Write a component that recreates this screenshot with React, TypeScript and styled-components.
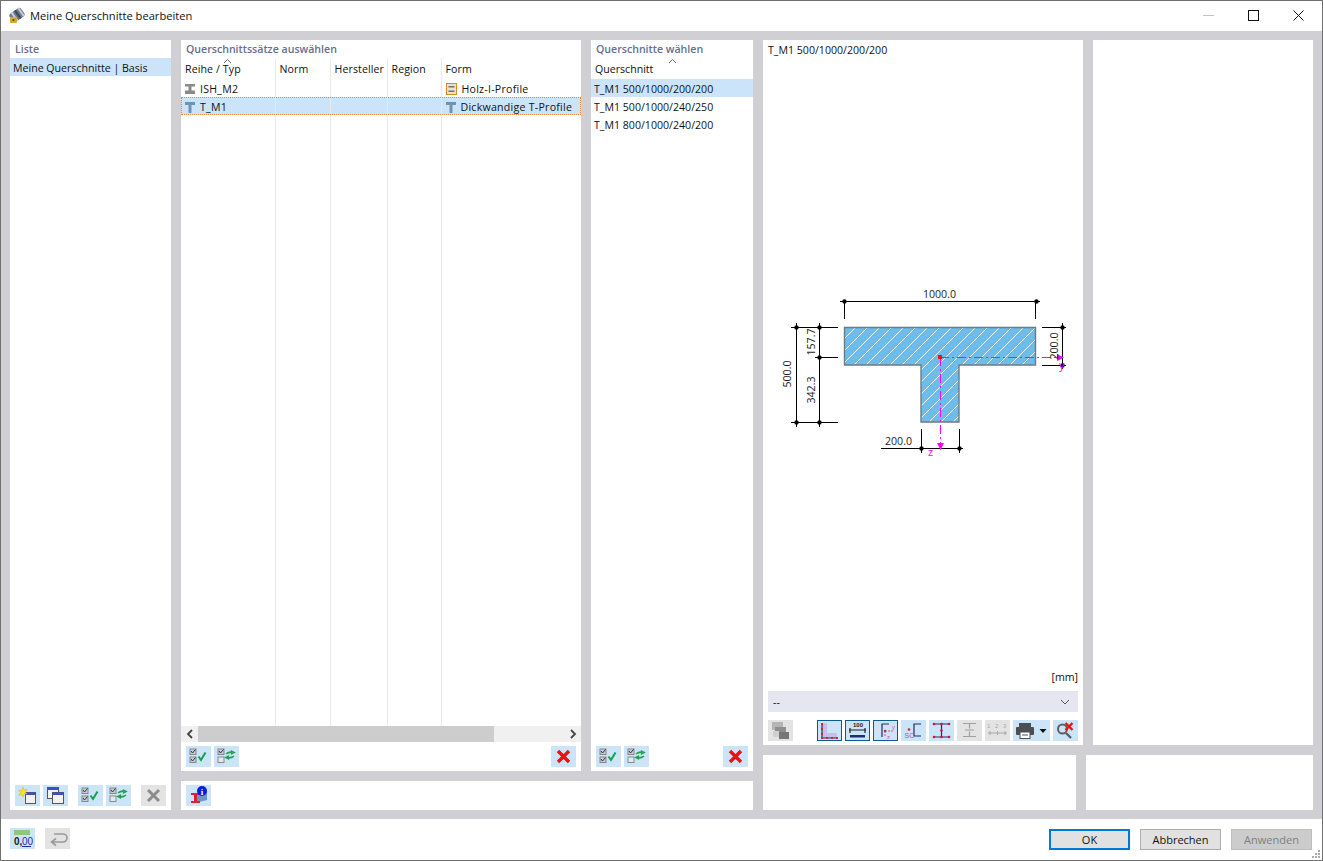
import styled, { createGlobalStyle } from 'styled-components';

const GlobalStyle = createGlobalStyle`
  html, body {
    margin: 0;
    padding: 0;
    background: #ffffff;
  }
  * {
    box-sizing: border-box;
  }
`;

const FONT = `'Open Sans', 'Noto Sans', sans-serif`;

// Window frame
const Window = styled.div`
  width: 1323px;
  height: 861px;
  border: 1px solid #707070;
  display: flex;
  flex-direction: column;
  font-family: ${FONT};
  font-size: 10.6px;
  color: #111;
  background: #ffffff;
  position: relative;
`;

const TitleBar = styled.div`
  height: 30px;
  flex: none;
  display: flex;
  align-items: center;
  padding: 0 1px 2px 7px;
`;

const WindowTitle = styled.span`
  margin-left: 5px;
  font-size: 11.15px;
  color: #111;
`;

const WindowControls = styled.div`
  margin-left: auto;
  display: flex;
  height: 100%;
`;

const WindowControl = styled.div`
  width: 45px;
  height: 100%;
  display: flex;
  align-items: center;
  justify-content: center;
`;

const Content = styled.div`
  flex: 1;
  min-height: 0;
  background: #d0cfd4;
  padding: 9px;
  display: flex;
  gap: 10px;
`;

const Column = styled.div<{ $w: number }>`
  width: ${(p) => p.$w}px;
  flex: none;
  display: flex;
  flex-direction: column;
  gap: 10px;
`;

const PanelRow = styled.div<{ $h?: number }>`
  display: flex;
  gap: 10px;
  ${(p) => (p.$h ? `height: ${p.$h}px; flex: none;` : 'flex: 1; min-height: 0;')}
`;

const Panel = styled.section<{ $w?: number }>`
  background: #ffffff;
  display: flex;
  flex-direction: column;
  min-height: 0;
  min-width: 0;
  ${(p) => (p.$w ? `width: ${p.$w}px; flex: none;` : 'flex: 1;')}
`;

const PanelTitle = styled.div`
  height: 18px;
  flex: none;
  padding: 2px 0 0 5px;
  font-weight: 600;
  color: #64708e;
  line-height: 15px;
  white-space: nowrap;
`;

const ListRow = styled.div<{ $selected?: boolean }>`
  height: 18px;
  flex: none;
  line-height: 20px;
  padding-left: 3px;
  white-space: nowrap;
  background: ${(p) => (p.$selected ? '#cce4f9' : 'transparent')};
`;

const Grow = styled.div`
  flex: 1;
  min-height: 0;
`;

// Toolbars
const Toolbar = styled.div`
  flex: none;
  display: flex;
  align-items: center;
  gap: 3px;
  padding: 4px 5px;
`;

const Spacer = styled.div<{ $w?: number }>`
  ${(p) => (p.$w ? `width: ${p.$w}px; flex: none;` : 'flex: 1;')}
`;

const ToolButton = styled.div<{ $variant?: 'blue' | 'gray' | 'active'; $w?: number }>`
  width: ${(p) => p.$w ?? 25}px;
  height: 21px;
  flex: none;
  display: flex;
  align-items: center;
  justify-content: center;
  background: ${(p) => (p.$variant === 'gray' ? '#e3e3e3' : '#cce4f7')};
  border: ${(p) => (p.$variant === 'active' ? '1px solid #0f5a94' : 'none')};
`;

// Table
const TableWrap = styled.div`
  flex: 1;
  min-height: 0;
  overflow: hidden;
`;

const Table = styled.table`
  width: 100%;
  height: 100%;
  border-collapse: collapse;
  table-layout: fixed;
`;

const HeadCell = styled.th<{ $w?: number }>`
  ${(p) => (p.$w ? `width: ${p.$w}px;` : '')}
  height: 21px;
  padding: 1px 0 1px 4px;
  text-align: left;
  font-weight: 400;
  letter-spacing: 0.1px;
  white-space: nowrap;
  border-right: 1px solid #e9e9e9;
  position: relative;
  &:last-child {
    border-right: none;
  }
`;

const SortCaret = styled.svg<{ $x: number }>`
  position: absolute;
  left: ${(p) => p.$x}px;
  top: 0;
`;

const BodyRow = styled.tr<{ $selected?: boolean }>`
  height: 18px;
  background: ${(p) => (p.$selected ? '#cce4f9' : 'transparent')};
  ${(p) => (p.$selected ? 'outline: 1px dotted #e08a3c; outline-offset: -1px;' : '')}
`;

const BodyCell = styled.td`
  padding: 2px 0 0 4px;
  white-space: nowrap;
  letter-spacing: 0.25px;
  border-right: 1px solid #e9e9e9;
  line-height: 16px;
  &:last-child {
    border-right: none;
  }
`;

const FillerRow = styled.tr`
  height: auto;
`;

const CellInner = styled.div`
  display: flex;
  align-items: center;
  gap: 5px;
`;

const SingleHeader = styled.div`
  height: 21px;
  flex: none;
  padding: 2px 0 0 4px;
  line-height: 18px;
  position: relative;
`;

// Scrollbar
const ScrollBar = styled.div`
  height: 16px;
  flex: none;
  display: flex;
  align-items: center;
  background: #f0f0f0;
`;

const ScrollArrow = styled.div`
  width: 17px;
  height: 100%;
  flex: none;
  display: flex;
  align-items: center;
  justify-content: center;
`;

const ScrollTrack = styled.div`
  flex: 1;
  height: 100%;
`;

const ScrollThumb = styled.div`
  width: 296px;
  height: 100%;
  background: #cdcdcd;
`;

// Preview
const PreviewCaption = styled.div`
  height: 18px;
  flex: none;
  padding: 2px 0 0 5px;
  line-height: 16px;
`;

const DiagramArea = styled.div`
  flex: 1;
  min-height: 0;
  display: flex;
  align-items: center;
  justify-content: center;
`;

const UnitLabel = styled.div`
  height: 20px;
  flex: none;
  padding: 0 5px 0 0;
  text-align: right;
  line-height: 12px;
`;

const SelectBox = styled.div`
  height: 21px;
  flex: none;
  margin: 0 5px 4px;
  padding: 0 8px 0 5px;
  background: #e6e6f0;
  display: flex;
  align-items: center;
  justify-content: space-between;
`;

// Footer
const Footer = styled.div`
  height: 41px;
  flex: none;
  display: flex;
  padding: 9px 10px 0 9px;
  align-items: flex-start;
`;

const DialogButton = styled.div<{ $kind?: 'default' | 'disabled' }>`
  width: 81px;
  height: 21px;
  margin: 1px 0 0 10px;
  flex: none;
  display: flex;
  align-items: center;
  justify-content: center;
  font-size: 11px;
  background: ${(p) => (p.$kind === 'disabled' ? '#cccccc' : '#e1e1e1')};
  color: ${(p) => (p.$kind === 'disabled' ? '#808080' : '#111')};
  border: ${(p) =>
    p.$kind === 'default'
      ? '2px solid #0078d7'
      : p.$kind === 'disabled'
        ? '1px solid #bfbfbf'
        : '1px solid #adadad'};
`;

const Grip = styled.svg`
  position: absolute;
  right: 1px;
  bottom: 1px;
`;

// Icons
const AppIcon = () => (
  <svg width="17" height="17" viewBox="0 0 17 17">
    <g transform="rotate(-35 9 8)">
      <rect x="2" y="3" width="14" height="10" rx="2.500" fill="#6f7b8c" />
      <rect x="5" y="3" width="2" height="10" fill="#c9d0da" />
      <rect x="9" y="3" width="2" height="10" fill="#3c4658" />
      <rect x="13" y="3" width="2" height="10" fill="#c9d0da" />
    </g>
    <rect x="2" y="10" width="7" height="6" rx="1" fill="#d8a92c" />
    <rect x="4.500" y="12" width="2" height="2" fill="#6b5210" />
  </svg>
);

const IBeam = () => (
  <svg width="10" height="10" viewBox="0 0 10 10">
    <path d="M0 0h10v2.500H6.500v4H10V10H0V6.500h3.500v-4H0z" fill="#8a8a8a" />
  </svg>
);

const TBeam = () => (
  <svg width="10" height="11" viewBox="0 0 10 11">
    <path d="M0 0h10v3H6.500v8h-3V3H0z" fill="#6d94b5" />
  </svg>
);

const WoodIcon = () => (
  <svg width="11" height="12" viewBox="0 0 11 12">
    <rect x="0.500" y="0.500" width="10" height="11" fill="#e8e2d2" stroke="#d98a24" />
    <path d="M2.500 3h6v1.500h-6zM2.500 7.500h6V9h-6z" fill="#76706a" />
  </svg>
);

const CheckBoxes = () => (
  <>
    <rect x="4" y="3" width="6" height="5.500" fill="#c8ccd2" stroke="#84888e" />
    <path d="M5 5l1.500 2L9.500 3.500" fill="none" stroke="#333" />
  </>
);

const CheckAllIcon = () => (
  <svg width="25" height="21" viewBox="0 0 25 21">
    <CheckBoxes />
    <rect x="4" y="11" width="6" height="5.500" fill="#c8ccd2" stroke="#84888e" />
    <path d="M5 13l1.500 2 3-3.500" fill="none" stroke="#333" />
    <path d="M12.500 10.500l2.500 3.500 4.500-7.500" fill="none" stroke="#12a150" strokeWidth="2" />
  </svg>
);

const ToggleIcon = () => (
  <svg width="25" height="21" viewBox="0 0 25 21">
    <CheckBoxes />
    <rect x="4" y="11" width="6" height="5.500" fill="#dfeaf4" stroke="#8a8a8a" />
    <path d="M12 8c2-2 5-2.500 8-1.500M20.500 6.500l-3-1.500v3z" fill="#22a04e" stroke="#22a04e" strokeWidth="1.200" />
    <path d="M20 10c-2 2-5 2.500-8 1.500M11.500 11.500l3 1.500v-3z" fill="#22a04e" stroke="#22a04e" strokeWidth="1.200" />
  </svg>
);

const RedXIcon = () => (
  <svg width="25" height="21" viewBox="0 0 25 21">
    <path d="M7 5l11 11M18 5L7 16" stroke="#f01010" strokeWidth="3.400" />
  </svg>
);

const GrayXIcon = () => (
  <svg width="25" height="21" viewBox="0 0 25 21">
    <path d="M7 5l11 11M18 5L7 16" stroke="#8c8c8c" strokeWidth="3" />
  </svg>
);

const NewWindowIcon = () => (
  <svg width="25" height="21" viewBox="0 0 25 21">
    <rect x="10.500" y="7.500" width="10" height="11" fill="#f2f2f2" stroke="#555" />
    <rect x="10.500" y="7.500" width="10" height="2.500" fill="#3a50c8" />
    <path d="M8 2l1.200 3 3-.6-2 2.400 2 2.400-3-.6L8 12 6.800 9.600l-3 .6 2-2.400-2-2.400 3 .6z" fill="#f8e71c" stroke="#d8a000" strokeWidth=".4" />
  </svg>
);

const CopyWindowIcon = () => (
  <svg width="25" height="21" viewBox="0 0 25 21">
    <rect x="4.500" y="2.500" width="11" height="11" fill="#f2f2f2" stroke="#555" />
    <rect x="4.500" y="2.500" width="11" height="2.500" fill="#3a50c8" />
    <rect x="9.500" y="7.500" width="11" height="11" fill="#f2f2f2" stroke="#555" />
    <rect x="9.500" y="7.500" width="11" height="2.500" fill="#3a50c8" />
  </svg>
);

const InfoIcon = () => (
  <svg width="25" height="21" viewBox="0 0 25 21">
    <path d="M9 10l12-3v8l-12 3z" fill="#6f95c4" />
    <path d="M5 8h9v2h-3v6h3v2H5v-2h3v-6H5z" fill="#d8222c" />
    <circle cx="16" cy="6" r="5" fill="#0a1ed8" />
    <text x="16" y="9.500" textAnchor="middle" fontSize="9" fontWeight="700" fill="#fff" fontFamily="Liberation Serif, serif">i</text>
  </svg>
);

const DecimalsIcon = () => (
  <svg width="25" height="21" viewBox="0 0 25 21">
    <rect x="4" y="2" width="16" height="5" fill="#8cc878" />
    <text x="4" y="17" fontSize="10" fontWeight="700" fill="#222" fontFamily="Liberation Sans, sans-serif">0,</text>
    <text x="12" y="17" fontSize="10" fill="#1c2f9c" fontFamily="Liberation Sans, sans-serif">00</text>
    <path d="M12 18.500h9" stroke="#1c2f9c" />
  </svg>
);

const UndoIcon = () => (
  <svg width="25" height="21" viewBox="0 0 25 21">
    <path d="M9 6h9a3.500 3.500 0 0 1 0 8H7M11 10.500L6.500 14l4.500 3.500" fill="none" stroke="#9a9a9a" strokeWidth="1.600" />
  </svg>
);

const SnapshotIcon = () => (
  <svg width="25" height="21" viewBox="0 0 25 21">
    <rect x="4" y="2" width="11" height="8" fill="#b5b5b5" />
    <rect x="7" y="7" width="11" height="8" fill="#8f8f8f" />
    <rect x="11" y="12" width="10" height="7" fill="#777" />
    <rect x="5" y="11" width="6" height="6" fill="#cfcfcf" />
  </svg>
);

const SurfaceIcon = () => (
  <svg width="23" height="19" viewBox="0 0 23 19">
    <path d="M4 2h5v10h10v5H4z" fill="#cbbcf0" />
    <path d="M4 2v15h15" fill="none" stroke="#1c2f6c" strokeWidth="1.200" />
    <g fill="#d8222c">
      <rect x="3" y="2" width="2" height="2" /><rect x="3" y="7" width="2" height="2" />
      <rect x="3" y="12" width="2" height="2" /><rect x="3" y="16" width="2" height="2" />
      <rect x="8" y="16" width="2" height="2" /><rect x="13" y="16" width="2" height="2" />
      <rect x="18" y="16" width="2" height="2" />
    </g>
  </svg>
);

const DimensionIcon = () => (
  <svg width="23" height="19" viewBox="0 0 23 19">
    <text x="12" y="6" textAnchor="middle" fontSize="6" fontWeight="700" fill="#222" fontFamily="Liberation Sans, sans-serif">100</text>
    <path d="M3 9h17" stroke="#222" />
    <path d="M4 7v5M19 7v5" stroke="#222" strokeWidth="1.200" />
    <rect x="4" y="14" width="15" height="2.500" fill="#1c2f6c" />
  </svg>
);

const AxesIcon = () => (
  <svg width="23" height="19" viewBox="0 0 23 19">
    <path d="M15 3H8v13" fill="none" stroke="#1c2f6c" strokeWidth="1.200" />
    <path d="M11 10h8M11 10v6" stroke="#d94fa8" strokeWidth="1" strokeDasharray="2 1" />
    <circle cx="11" cy="10" r="1.200" fill="#d8222c" />
    <text x="18" y="8" fontSize="6" fill="#d94fa8" fontFamily="Liberation Sans, sans-serif">y</text>
    <text x="13" y="18" fontSize="6" fill="#d94fa8" fontFamily="Liberation Sans, sans-serif">z</text>
  </svg>
);

const ShearIcon = () => (
  <svg width="25" height="21" viewBox="0 0 25 21">
    <path d="M20 4h-7v12h7" fill="none" stroke="#1c2f6c" strokeWidth="1.200" />
    <circle cx="8" cy="9.500" r="1.300" fill="#d8222c" />
    <text x="3.500" y="18" fontSize="7" fill="#c04aa0" fontFamily="Liberation Sans, sans-serif">SC</text>
  </svg>
);

const PointsIcon = () => (
  <svg width="25" height="21" viewBox="0 0 25 21">
    <path d="M5 4h15M5 17h15M12.500 4v13" fill="none" stroke="#1c2f6c" strokeWidth="1.200" />
    <g fill="#e01030">
      <circle cx="5" cy="4" r="1.300" /><circle cx="12.500" cy="4" r="1.300" /><circle cx="20" cy="4" r="1.300" />
      <circle cx="12.500" cy="10.500" r="1.300" />
      <circle cx="5" cy="17" r="1.300" /><circle cx="12.500" cy="17" r="1.300" /><circle cx="20" cy="17" r="1.300" />
    </g>
  </svg>
);

const OutlineIcon = () => (
  <svg width="25" height="21" viewBox="0 0 25 21">
    <path d="M6 3.500h13M6 16.500h13M12.500 3.500v5M12.500 11.500v5M8 10h9" fill="none" stroke="#a0a0a0" strokeWidth="1.200" />
  </svg>
);

const NumberingIcon = () => (
  <svg width="25" height="21" viewBox="0 0 25 21">
    <text x="12.500" y="8" textAnchor="middle" fontSize="6" letterSpacing="1.500" fill="#a8a8a8" fontFamily="Liberation Sans, sans-serif">1 2 3</text>
    <path d="M3 13h19M5 11v4M12.500 11v4M20 11v4" stroke="#a8a8a8" />
  </svg>
);

const PrintIcon = () => (
  <svg width="37" height="21" viewBox="0 0 37 21">
    <rect x="6" y="3" width="12" height="4" fill="#4a4f55" />
    <rect x="3" y="7" width="18" height="8" rx="1" fill="#4a4f55" />
    <rect x="7" y="12" width="10" height="6.500" fill="#fff" stroke="#4a4f55" />
    <path d="M9 15h6" stroke="#4a4f55" />
    <path d="M26.500 9h7l-3.500 4z" fill="#111" />
  </svg>
);

const ZoomResetIcon = () => (
  <svg width="25" height="21" viewBox="0 0 25 21">
    <circle cx="9.500" cy="9" r="4.500" fill="none" stroke="#5a6068" strokeWidth="2" />
    <path d="M13 13l5 5" stroke="#5a6068" strokeWidth="2.400" />
    <path d="M12.500 3l7 7M19.500 3l-7 7" stroke="#f01010" strokeWidth="2.400" />
  </svg>
);

const Caret = ({ x }: { x: number }) => (
  <SortCaret $x={x} width="9" height="6" viewBox="0 0 9 6">
    <path d="M1 5l3.500-3.500L8 5" fill="none" stroke="#666" />
  </SortCaret>
);

const BLACK_DOTS: [number, number][] = [
  [844, 301], [1036, 301],
  [796, 327], [819, 327], [819, 357], [796, 422], [819, 422],
  [1062, 327], [1062, 365],
  [921, 448], [959, 448],
];

// Section drawing with its dimension lines
function SectionDrawing() {
  return (
    <svg width="310" height="189" viewBox="768 270 310 189">
      <defs>
        <pattern id="hatch" width="12" height="12" patternUnits="userSpaceOnUse" patternTransform="translate(844 327)">
          <rect width="12" height="12" fill="#6dbce9" />
          <path d="M-2 2L2 -2M-2 14L14 -2M10 14L14 10" stroke="#ffffff" strokeWidth="1" opacity=".85" />
        </pattern>
      </defs>
      <path
        d="M844.500 327.500H1035.500V365H959V422H921V365H844.500Z"
        fill="url(#hatch)"
        stroke="#6f7a82"
        strokeWidth="1.400"
      />
      <g stroke="#000" strokeWidth="1" fill="none">
        <path d="M840 301.500H1040M844.500 301V319M1035.500 301V319" />
        <path d="M791 327.500H838M815 357.500H838M791 422.500H838" />
        <path d="M796.500 323V427M819.500 323V427" />
        <path d="M1042 327.500H1066M1042 365.500H1066M1062.500 323V369" />
        <path d="M881 448.500H963M921.500 429V453M959.500 429V453" />
      </g>
      <g fill="#000">
        {BLACK_DOTS.map(([x, y]) => (
          <circle key={`${x}-${y}`} cx={x + 0.5} cy={y + 0.5} r="2.200" />
        ))}
      </g>
      <g stroke="#ff00ff" strokeWidth="1" fill="none" strokeDasharray="9 3 2 3">
        <path d="M940 357.500H1060" />
        <path d="M940.500 357V445" />
      </g>
      <path d="M1057 354l7 3.500-7 3.500zM937 443h7l-3.500 7z" fill="#ff00ff" />
      <rect x="938" y="355" width="4" height="4" fill="#f01010" />
      <g fontFamily="'Open Sans', sans-serif" fontSize="10.600" fill="#1a1a1a">
        <text x="939.500" y="298" textAnchor="middle">1000.0</text>
        <text x="898.500" y="445" textAnchor="middle">200.0</text>
        <text transform="translate(791 374) rotate(-90)" textAnchor="middle">500.0</text>
        <text transform="translate(815 342) rotate(-90)" textAnchor="middle">157.7</text>
        <text transform="translate(815 390) rotate(-90)" textAnchor="middle">342.3</text>
        <text transform="translate(1058 346) rotate(-90)" textAnchor="middle">200.0</text>
      </g>
      <g fontFamily="'Open Sans', sans-serif" fontSize="11" fill="#ff00ff">
        <text x="1059" y="369">y</text>
        <text x="928" y="456">z</text>
      </g>
    </svg>
  );
}

const SETS = [
  { name: 'ISH_M2', form: 'Holz-I-Profile', icon: <IBeam />, formIcon: <WoodIcon /> },
  { name: 'T_M1', form: 'Dickwandige T-Profile', icon: <TBeam />, formIcon: <TBeam />, selected: true },
];

const SECTIONS = ['T_M1 500/1000/200/200', 'T_M1 500/1000/240/250', 'T_M1 800/1000/240/200'];

export default function App() {
  return (
    <>
      <GlobalStyle />
      <Window>
        <TitleBar>
          <AppIcon />
          <WindowTitle>Meine Querschnitte bearbeiten</WindowTitle>
          <WindowControls>
            <WindowControl>
              <svg width="11" height="11" viewBox="0 0 11 11"><path d="M0 5.500h11" stroke="#c4c4c4" /></svg>
            </WindowControl>
            <WindowControl>
              <svg width="11" height="11" viewBox="0 0 11 11"><rect x=".5" y=".5" width="10" height="10" fill="none" stroke="#111" /></svg>
            </WindowControl>
            <WindowControl>
              <svg width="11" height="11" viewBox="0 0 11 11"><path d="M.5 .5l10 10M10.500 .5l-10 10" stroke="#111" /></svg>
            </WindowControl>
          </WindowControls>
        </TitleBar>

        <Content>
          <Column $w={161}>
            <Panel>
              <PanelTitle>Liste</PanelTitle>
              <ListRow $selected>Meine Querschnitte | Basis</ListRow>
              <Grow />
              <Toolbar>
                <ToolButton><NewWindowIcon /></ToolButton>
                <ToolButton><CopyWindowIcon /></ToolButton>
                <Spacer $w={4} />
                <ToolButton><CheckAllIcon /></ToolButton>
                <ToolButton><ToggleIcon /></ToolButton>
                <Spacer $w={4} />
                <ToolButton $variant="gray"><GrayXIcon /></ToolButton>
              </Toolbar>
            </Panel>
          </Column>

          <Column $w={572}>
            <PanelRow>
              <Panel $w={400}>
                <PanelTitle>Querschnittssätze auswählen</PanelTitle>
                <TableWrap>
                  <Table>
                    <thead>
                      <tr>
                        <HeadCell $w={94}>Reihe / Typ<Caret x={42} /></HeadCell>
                        <HeadCell $w={55}>Norm</HeadCell>
                        <HeadCell $w={57}>Hersteller</HeadCell>
                        <HeadCell $w={54}>Region</HeadCell>
                        <HeadCell>Form</HeadCell>
                      </tr>
                    </thead>
                    <tbody>
                      {SETS.map((s) => (
                        <BodyRow key={s.name} $selected={s.selected}>
                          <BodyCell><CellInner>{s.icon}{s.name}</CellInner></BodyCell>
                          <BodyCell />
                          <BodyCell />
                          <BodyCell />
                          <BodyCell><CellInner>{s.formIcon}{s.form}</CellInner></BodyCell>
                        </BodyRow>
                      ))}
                      <FillerRow>
                        <BodyCell />
                        <BodyCell />
                        <BodyCell />
                        <BodyCell />
                        <BodyCell />
                      </FillerRow>
                    </tbody>
                  </Table>
                </TableWrap>
                <ScrollBar>
                  <ScrollArrow>
                    <svg width="8" height="10" viewBox="0 0 8 10"><path d="M6 1L2 5l4 4" fill="none" stroke="#444" strokeWidth="1.800" /></svg>
                  </ScrollArrow>
                  <ScrollTrack><ScrollThumb /></ScrollTrack>
                  <ScrollArrow>
                    <svg width="8" height="10" viewBox="0 0 8 10"><path d="M2 1l4 4-4 4" fill="none" stroke="#444" strokeWidth="1.800" /></svg>
                  </ScrollArrow>
                </ScrollBar>
                <Toolbar>
                  <ToolButton><CheckAllIcon /></ToolButton>
                  <ToolButton><ToggleIcon /></ToolButton>
                  <Spacer />
                  <ToolButton><RedXIcon /></ToolButton>
                </Toolbar>
              </Panel>
              <Panel>
                <PanelTitle>Querschnitte wählen</PanelTitle>
                <SingleHeader>Querschnitt<Caret x={77} /></SingleHeader>
                {SECTIONS.map((name, i) => (
                  <ListRow key={name} $selected={i === 0}>{name}</ListRow>
                ))}
                <Grow />
                <Toolbar>
                  <ToolButton><CheckAllIcon /></ToolButton>
                  <ToolButton><ToggleIcon /></ToolButton>
                  <Spacer />
                  <ToolButton><RedXIcon /></ToolButton>
                </Toolbar>
              </Panel>
            </PanelRow>
            <PanelRow $h={29}>
              <Panel>
                <Toolbar>
                  <ToolButton><InfoIcon /></ToolButton>
                </Toolbar>
              </Panel>
            </PanelRow>
          </Column>

          <Column $w={550}>
            <PanelRow>
              <Panel $w={320}>
                <PreviewCaption>T_M1 500/1000/200/200</PreviewCaption>
                <DiagramArea><SectionDrawing /></DiagramArea>
                <UnitLabel>[mm]</UnitLabel>
                <SelectBox>
                  <span>--</span>
                  <svg width="10" height="6" viewBox="0 0 10 6"><path d="M1 1l4 4 4-4" fill="none" stroke="#555" /></svg>
                </SelectBox>
                <Toolbar>
                  <ToolButton $variant="gray"><SnapshotIcon /></ToolButton>
                  <Spacer $w={18} />
                  <ToolButton $variant="active"><SurfaceIcon /></ToolButton>
                  <ToolButton $variant="active"><DimensionIcon /></ToolButton>
                  <ToolButton $variant="active"><AxesIcon /></ToolButton>
                  <ToolButton><ShearIcon /></ToolButton>
                  <ToolButton><PointsIcon /></ToolButton>
                  <ToolButton $variant="gray"><OutlineIcon /></ToolButton>
                  <ToolButton $variant="gray"><NumberingIcon /></ToolButton>
                  <ToolButton $w={37}><PrintIcon /></ToolButton>
                  <ToolButton><ZoomResetIcon /></ToolButton>
                </Toolbar>
              </Panel>
              <Panel />
            </PanelRow>
            <PanelRow $h={55}>
              <Panel $w={313} />
              <Panel />
            </PanelRow>
          </Column>
        </Content>

        <Footer>
          <ToolButton><DecimalsIcon /></ToolButton>
          <Spacer $w={10} />
          <ToolButton $variant="gray"><UndoIcon /></ToolButton>
          <Spacer />
          <DialogButton $kind="default">OK</DialogButton>
          <DialogButton>Abbrechen</DialogButton>
          <DialogButton $kind="disabled">Anwenden</DialogButton>
        </Footer>
        <Grip width="10" height="10" viewBox="0 0 10 10">
          <g fill="#a9a9a9">
            <rect x="7" y="1" width="2" height="2" />
            <rect x="4" y="4" width="2" height="2" /><rect x="7" y="4" width="2" height="2" />
            <rect x="1" y="7" width="2" height="2" /><rect x="4" y="7" width="2" height="2" /><rect x="7" y="7" width="2" height="2" />
          </g>
        </Grip>
      </Window>
    </>
  );
}
